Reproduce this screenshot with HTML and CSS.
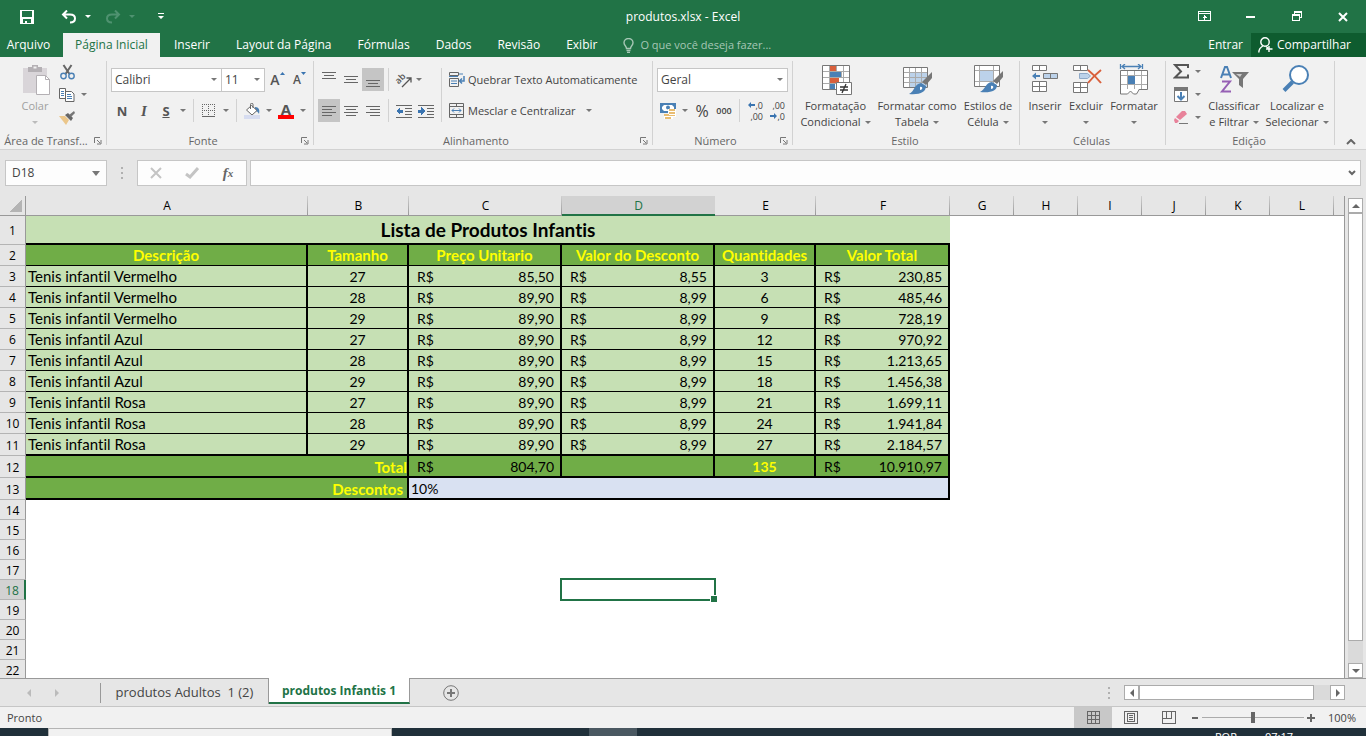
FILE: index.html
```html
<!DOCTYPE html>
<html lang="pt-BR">
<head>
<meta charset="utf-8">
<title>produtos.xlsx - Excel</title>
<link rel="stylesheet" href="styles.css">
</head>
<body>
<div class="app">
<header class="titlebar">
  <div class="quick">
    <button class="qbtn" aria-label="Salvar"><svg width="14" height="14" viewBox="0 0 14 14"><path d="M0 0h14v14H0z" fill="#fff"/><path d="M2 1h10v6H2zM3 9h8v4H7v-2H5v2H3z" fill="#217346"/></svg></button>
    <button class="qbtn undo" aria-label="Desfazer"><svg width="16" height="14" viewBox="0 0 16 14" fill="none" stroke="#fff" stroke-width="2"><path d="M6 0.500L2 4.500l4 4M2 4.500h7c3.500 0 5 2 5 4s-1.500 4-5 4"/></svg></button>
    <button class="drop white" aria-label="Opções de desfazer"></button>
    <button class="qbtn redo" aria-label="Refazer"><svg width="16" height="14" viewBox="0 0 16 14" fill="none" stroke="#4f9270" stroke-width="2"><path d="M10 0.500l4 4-4 4M14 4.500H7c-3.500 0-5 2-5 4s1.500 4 5 4"/></svg></button>
    <button class="drop faint" aria-label="Opções de refazer"></button>
    <button class="qbtn" aria-label="Personalizar"><svg width="6" height="7" viewBox="0 0 6 7" fill="#fff"><path d="M0 0h6v1H0zM0 3h6L3 6z"/></svg></button>
  </div>
  <h1 class="doc">produtos.xlsx - Excel</h1>
  <div class="window">
    <button aria-label="Opções da faixa"><svg width="14" height="11" viewBox="0 0 14 11" fill="none" stroke="#fff" shape-rendering="crispEdges"><path d="M.5.5h12v9H.5zM0 2.500h13M6.500 4v5M5.500 5.500h2M4.500 6.500h4"/></svg></button>
    <button aria-label="Minimizar"><svg width="10" height="10" viewBox="0 0 10 10" fill="#fff"><path d="M0 4h9v2H0z"/></svg></button>
    <button aria-label="Restaurar"><svg width="11" height="11" viewBox="0 0 11 11" fill="none" stroke="#fff" shape-rendering="crispEdges"><path d="M.5 3.500h7v6h-7zM0 4.500h8M2.500 3V.5h7v6H8M2 1.500h8"/></svg></button>
    <button aria-label="Fechar"><svg width="10" height="10" viewBox="0 0 10 10" stroke="#fff" stroke-width="2"><path d="M1 1l8 8M9 1L1 9"/></svg></button>
  </div>
</header>
<nav class="tabs">
  <button class="tab file">Arquivo</button>
  <button class="tab active">Página Inicial</button>
  <button class="tab">Inserir</button>
  <button class="tab">Layout da Página</button>
  <button class="tab">Fórmulas</button>
  <button class="tab">Dados</button>
  <button class="tab">Revisão</button>
  <button class="tab">Exibir</button>
  <label class="tell"><svg width="11" height="15" viewBox="0 0 11 15" fill="none" stroke="#a6c7b5" stroke-width="1.400"><path d="M3.500 10.500C3.500 8 1 7.500 1 4.800a4.500 4.300 0 0 1 9 0c0 2.700-2.500 3.200-2.500 5.700zM3.500 12.500h4M4 14.500h3"/></svg><input type="text" placeholder="O que você deseja fazer..." aria-label="O que você deseja fazer"></label>
  <button class="tab enter">Entrar</button>
  <button class="tab share"><svg width="15" height="16" viewBox="0 0 15 16" fill="none" stroke="#fff" stroke-width="1.400"><circle cx="7" cy="5" r="4.200"/><path d="M.8 15.500c0-3 1.500-5 4-6.500M8 9.500l2 1.500M11 9v6M8 12h6.500"/></svg>Compartilhar</button>
</nav>

<section class="ribbon" aria-label="Página Inicial">
  <div class="group g-clip">
    <div class="body">
      <button class="big off"><svg width="32" height="32" viewBox="0 0 32 32"><path d="M4 4h24v25H4z" fill="#d9d5d9"/><path d="M9 3h4V1h6v2h4v5H9z" fill="#b4b0b4"/><path d="M14.500 2.500h3v2h-3z" fill="#f1f1f1"/><path d="M17.500 11.500h9l4 4v15h-13z" fill="#fff" stroke="#b4b0b4"/><path d="M26.500 11.500v4h4" fill="none" stroke="#b4b0b4"/></svg><span>Colar</span><i class="ar"></i></button>
      <div class="smalls">
        <div class="line"><button class="ib" aria-label="Recortar"><svg width="15" height="16" viewBox="0 0 15 16" fill="none"><path d="M3.500 1l6 9M11.500 1l-6 9" stroke="#666" stroke-width="2"/><circle cx="3.500" cy="12" r="2.700" stroke="#4a80b5" stroke-width="1.400"/><circle cx="11.500" cy="12" r="2.700" stroke="#4a80b5" stroke-width="1.400"/></svg></button></div>
        <div class="line"><button class="ib" aria-label="Copiar"><svg width="16" height="14" viewBox="0 0 16 14"><path d="M.5.5h6v10h-6zM6.500 3.500h6l2.500 2.500v7.500H6.500z" fill="#fff" stroke="#666"/><path d="M2 3.500h3M2 5.500h3M2 7.500h3M8 6.500h4M8 8.500h5M8 10.500h5" stroke="#4a80b5"/></svg></button><button class="drop" aria-label="Opções de copiar"></button></div>
        <div class="line"><button class="ib" aria-label="Pincel de Formatação"><svg width="16" height="14" viewBox="0 0 16 14"><path d="M0 5l6 0 4 4-3 5z" fill="#ebc68a"/><path d="M6 4l3-2 5 5-2 3z" fill="#666"/><path d="M10 4l5-4 1 2-4 4z" fill="#777"/></svg></button></div>
      </div>
    </div>
    <div class="foot"><span>Área de Transf...</span><button class="launch" aria-label="Área de Transferência"><svg width="8" height="8" viewBox="0 0 8 8" fill="none" stroke="#777"><path d="M.5 6V.5H6M3 3l3 3M7 3v4H3"/></svg></button></div>
  </div>

  <div class="group g-font">
    <div class="body rows">
      <div class="row">
        <label class="combo font"><select aria-label="Fonte"><option>Calibri</option></select></label>
        <label class="combo size"><select aria-label="Tamanho"><option>11</option></select></label>
        <button class="ib glyph grow" aria-label="Aumentar Fonte">A<svg class="tip" width="5" height="12" viewBox="0 0 5 12" fill="#3a74b0"><path d="M0 3h5L2.500 0z"/></svg></button>
        <button class="ib glyph grow small" aria-label="Diminuir Fonte">A<svg class="tip" width="5" height="12" viewBox="0 0 5 12" fill="#3a74b0"><path d="M0 0h5L2.500 3z"/></svg></button>
      </div>
      <div class="row">
        <button class="ib glyph sm">N</button><button class="ib glyph sm it">I</button><button class="ib glyph sm ul">S</button><button class="drop" aria-label="Sublinhado"></button>
        <i class="sep"></i>
        <button class="ib" aria-label="Bordas"><svg width="14" height="14" viewBox="0 0 14 14" stroke="#666" fill="none" shape-rendering="crispEdges"><path d="M0 .5h13M0 6.500h13M.5 0v12M6.500 0v12M12.500 0v12" stroke-dasharray="1 1"/><path d="M0 12.500h13"/></svg></button><button class="drop" aria-label="Opções de bordas"></button>
        <i class="sep"></i>
        <button class="ib" aria-label="Cor de Preenchimento"><svg width="16" height="16" viewBox="0 0 16 16"><path d="M11 4c4 0 5 3 4 7-1-2-2-3-4-3z" fill="#4a80b5"/><path d="M7.500 2.500l5.500 5-5 4.500-5.500-5z" fill="#fff" stroke="#666"/><path d="M6.500 6V1.500a1.200 1.200 0 0 1 2.500 0V5" fill="none" stroke="#666"/><path d="M0 12h16v4H0z" fill="#d6dcf0"/></svg></button><button class="drop" aria-label="Opções de preenchimento"></button>
        <button class="ib glyph ink" aria-label="Cor da Fonte">A</button><button class="drop" aria-label="Opções de cor"></button>
      </div>
    </div>
    <div class="foot"><span>Fonte</span><button class="launch" aria-label="Opções de Fonte"><svg width="8" height="8" viewBox="0 0 8 8" fill="none" stroke="#777"><path d="M.5 6V.5H6M3 3l3 3M7 3v4H3"/></svg></button></div>
  </div>

  <div class="group g-align">
    <div class="body">
      <div class="rows stack">
        <div class="row">
          <button class="ib" aria-label="Alinhar em Cima"><svg class="ln" width="14" height="16" viewBox="0 0 14 16"><path d="M0 0.500h14M2 3.500h10M0 6.500h14"/></svg></button><button class="ib" aria-label="Alinhar no Meio"><svg class="ln" width="14" height="16" viewBox="0 0 14 16"><path d="M0 4.500h14M2 7.500h10M0 10.500h14"/></svg></button><button class="ib on" aria-label="Alinhar Embaixo"><svg class="ln" width="14" height="16" viewBox="0 0 14 16"><path d="M0 8.500h14M2 11.500h10M0 14.500h14"/></svg></button>
          <i class="sep"></i>
          <button class="ib" aria-label="Orientação"><svg class="angle" width="18" height="18" viewBox="0 0 18 18" fill="none" stroke="#555" stroke-width="1.300"><path d="M7 16L15.500 7.500M11.500 7H16v4.500"/><text class="ab" x="-7" y="12" transform="rotate(-45)">ab</text></svg></button><button class="drop near" aria-label="Opções de orientação"></button>
        </div>
        <div class="row">
          <button class="ib on" aria-label="Alinhar à Esquerda"><svg class="ln" width="14" height="12" viewBox="0 0 14 12"><path d="M0 1.500h14M0 4.500h10M0 7.500h14M0 10.500h10"/></svg></button><button class="ib" aria-label="Centralizar"><svg class="ln" width="14" height="12" viewBox="0 0 14 12"><path d="M0 1.500h14M2 4.500h10M0 7.500h14M2 10.500h10"/></svg></button><button class="ib" aria-label="Alinhar à Direita"><svg class="ln" width="14" height="12" viewBox="0 0 14 12"><path d="M0 1.500h14M4 4.500h10M0 7.500h14M4 10.500h10"/></svg></button>
          <i class="sep"></i>
          <button class="ib" aria-label="Diminuir Recuo"><svg class="ln" width="16" height="14" viewBox="0 0 16 14"><path d="M0 1.500h16M9 4.500h7M9 7.500h7M9 10.500h7M0 13.500h16"/><path class="fillblue" d="M0 7l4-4v2.500h3v3H4V11z"/></svg></button><button class="ib" aria-label="Aumentar Recuo"><svg class="ln" width="16" height="14" viewBox="0 0 16 14"><path d="M0 1.500h16M9 4.500h7M9 7.500h7M9 10.500h7M0 13.500h16"/><path class="fillblue" d="M7 7L3 3v2.500H0v3h3V11z"/></svg></button>
        </div>
      </div>
      <i class="sep tall"></i>
      <div class="rows wide">
        <button class="row txt"><svg width="16" height="16" viewBox="0 0 16 16" fill="none" stroke="#666"><path d="M.5.500h9v3h-9zM.5 6.500v8h9v-8z"/><path d="M0 4.500h9M2 9h6M2 11.500h6M10 2h4" stroke="#4a80b5"/><path d="M15 4v5h-4M13 6.500L10.500 9l2.500 2.500" stroke="#4a80b5" stroke-width="1.500"/></svg>Quebrar Texto Automaticamente</button>
        <button class="row txt"><svg width="16" height="16" viewBox="0 0 16 16" fill="none" stroke="#666"><path d="M.5.500h14v14H.5zM0 3.500h15M0 11.500h15M7.500 0v3M7.500 12v3"/><path d="M3 7.500h9M5 5.500l-2 2 2 2M10 5.500l2 2-2 2" stroke="#4a80b5"/></svg>Mesclar e Centralizar<i class="ar"></i></button>
      </div>
    </div>
    <div class="foot"><span>Alinhamento</span><button class="launch" aria-label="Opções de Alinhamento"><svg width="8" height="8" viewBox="0 0 8 8" fill="none" stroke="#777"><path d="M.5 6V.5H6M3 3l3 3M7 3v4H3"/></svg></button></div>
  </div>

  <div class="group g-num">
    <div class="body rows">
      <div class="row"><label class="combo num"><select aria-label="Formato"><option>Geral</option></select></label></div>
      <div class="row">
        <button class="ib" aria-label="Moeda"><svg width="16" height="16" viewBox="0 0 16 16"><path d="M0 0h16v10H0z" fill="#4a80b5"/><path d="M2 4l2-2h8l2 2v2H9v2H4L2 6z" fill="#fff"/><circle cx="8" cy="4.500" r="2" fill="#4a80b5"/><path d="M8 6h8v8h-3v2H4v-5h4z" fill="#fff"/><path d="M9 6h6v2H9zM9 9h6v2H9zM9 12h6v1H9zM4 11h5v2H4zM5 14h6v2H5z" fill="#e9bd72"/></svg></button><button class="drop" aria-label="Opções de moeda"></button><button class="ib pct">%</button><button class="ib zeros">000</button>
        <i class="sep"></i>
        <button class="ib dec" aria-label="Aumentar Casas Decimais"><span><svg width="8" height="6" viewBox="0 0 8 6" fill="#3a74b0"><path d="M0 3l3-3v2h4v2H3v2z"/></svg>,0</span><span>,00</span></button><button class="ib dec" aria-label="Diminuir Casas Decimais"><span>,00</span><span><svg width="8" height="6" viewBox="0 0 8 6" fill="#3a74b0"><path d="M7 3L4 0v2H0v2h4v2z"/></svg>,0</span></button>
      </div>
    </div>
    <div class="foot"><span>Número</span><button class="launch" aria-label="Opções de Número"><svg width="8" height="8" viewBox="0 0 8 8" fill="none" stroke="#777"><path d="M.5 6V.5H6M3 3l3 3M7 3v4H3"/></svg></button></div>
  </div>

  <div class="group g-style">
    <div class="body">
      <button class="big w-cond"><svg width="32" height="32" viewBox="0 0 32 32"><path d="M2 1h28v25H2z" fill="#fff"/><path d="M10 1h6v6h-6zM10 14h9v5h-9z" fill="#d9603c"/><path d="M10 8h11v5H10zM10 20h5v6h-5z" fill="#4a80b5"/><path d="M2 7.500h28M2 13.500h28M2 19.500h28M9.500 1v25M23.500 1v25M16.500 1v6M21.500 8v6" stroke="#aaa" fill="none"/><path d="M2.500 1.500h27v24h-27z" fill="none" stroke="#777"/><path d="M16.500 18.500h15v12h-15z" fill="#fff" stroke="#777"/><path d="M20 23h8M20 26h8M26 20l-4 9" stroke="#333" stroke-width="1.300"/></svg><span>Formatação<br>Condicional<i class="ar"></i></span></button>
      <button class="big w-tab"><svg width="32" height="32" viewBox="0 0 32 32"><path d="M2.500 3.500h24v20h-24z" fill="#fff" stroke="#777"/><path d="M9 9h17v14H9z" fill="#bcd2ea"/><path d="M3 8.500h23M3 13.500h23M3 18.500h23M8.500 4v19M14.500 4v19M20.500 4v19" stroke="#aaa"/><path d="M31 8v6l-6 7-4-3z" fill="#777"/><path d="M20 19l5 3c0 6-6 9-17 8 6-3 5-10 12-11z" fill="#4a80b5"/><path d="M19 23c3-1 3 3 0 3z" fill="#fff"/></svg><span>Formatar como<br>Tabela<i class="ar"></i></span></button>
      <button class="big w-cell"><svg width="32" height="32" viewBox="0 0 32 32"><path d="M2.500 1.500h25v21h-25z" fill="#fff" stroke="#777"/><path d="M8 7h13v10H8z" fill="#bcd2ea"/><path d="M3 6.500h24M3 17.500h24M7.500 2v20M21.500 2v20" stroke="#aaa"/><path d="M31 7v6l-6 7-4-3z" fill="#777"/><path d="M20 18l5 3c0 6-6 8-17 7 6-3 5-9 12-10z" fill="#4a80b5"/><path d="M19 22c3-1 3 3 0 3z" fill="#fff"/></svg><span>Estilos de<br>Célula<i class="ar"></i></span></button>
    </div>
    <div class="foot"><span>Estilo</span></div>
  </div>

  <div class="group g-cells">
    <div class="body">
      <button class="big w-ins"><svg width="32" height="32" viewBox="0 0 32 32" fill="#fff" stroke="#777"><path d="M3.500 1.500h14v5h-14zM10.500 1.500v5M3.500 17.500h14v10h-14zM10.500 17v11M3 22.500h15"/><path d="M14.500 9.500h14v5h-14z" fill="#bcd2ea"/><path d="M21.500 9.500v5"/><path d="M3 12l4-3.500V11h4v2H7v2.500z" fill="#4a80b5" stroke="none"/></svg><span>Inserir</span><i class="ar"></i></button>
      <button class="big w-del"><svg width="32" height="32" viewBox="0 0 32 32" fill="#fff" stroke="#777"><path d="M3.500 1.500h14v5h-14zM10.500 1.500v5M3.500 18.500h14v10h-14zM10.500 18v11M3 23.500h15"/><path d="M9.500 9.500h8l3 2.500-3 2.500h-8z" fill="#bcd2ea" stroke="#8ea9c8"/><path d="M18 6c5 4 9 8 13 13M31 6c-5 4-9 8-13 13" stroke="#d9603c" stroke-width="2" fill="none"/></svg><span>Excluir</span><i class="ar"></i></button>
      <button class="big w-fmt"><svg width="32" height="32" viewBox="0 0 32 32"><path d="M2.500 6.500h27v19h-27z" fill="#fff" stroke="#777"/><path d="M3 11.500h26M3 20.500h26M9.500 7v18M16.500 7v18M23.500 7v18" stroke="#aaa"/><path d="M10 12h7v8h-7z" fill="#4a80b5"/><path d="M2.500 25v5h7l3-3 3 3h3l3-5" fill="#fff" stroke="#777"/><path d="M2.500 0v5M24.500 0v5M4 2.500h19M7 0L4 2.500 7 5M20 0l3 2.500L20 5" stroke="#4a80b5" stroke-width="1.300" fill="none"/></svg><span>Formatar</span><i class="ar"></i></button>
    </div>
    <div class="foot"><span>Células</span></div>
  </div>

  <div class="group g-edit">
    <div class="body">
      <div class="smalls">
        <div class="line"><button class="ib" aria-label="Soma"><svg width="16" height="15" viewBox="0 0 16 15" fill="none" stroke="#555" stroke-width="2"><path d="M15 4V1H2l6 6.500L2 13.500h13v-3"/></svg></button><button class="drop" aria-label="Opções de soma"></button></div>
        <div class="line"><button class="ib" aria-label="Preencher"><svg width="14" height="15" viewBox="0 0 14 15"><path d="M.5.500h13v14H.5z" fill="#fff" stroke="#777"/><path d="M0 0h14v4H0z" fill="#777"/><path d="M7 5v7M3.500 9L7 12.500 10.500 9" fill="none" stroke="#4a80b5" stroke-width="2"/></svg></button><button class="drop" aria-label="Opções de preencher"></button></div>
        <div class="line"><button class="ib" aria-label="Limpar"><svg width="14" height="13" viewBox="0 0 14 13"><path d="M8 0h3l2 3-7 6-4-3z" fill="#e8829a"/><path d="M1 7l4 3-2 2H1L0 9z" fill="#e8829a"/><path d="M5 12.500h9" stroke="#777"/></svg></button><button class="drop" aria-label="Opções de limpar"></button></div>
      </div>
      <button class="big w-sort"><svg width="32" height="32" viewBox="0 0 32 32" fill="none"><path d="M3 14L7 3h2l4 11M4.500 10.500h7" stroke="#4a80b5" stroke-width="2"/><path d="M4 17.500h8l-8 10h9" stroke="#9660b4" stroke-width="2"/><path d="M14 8h17l-6 7v9l-4-3v-6z" fill="#777"/><path d="M18 10h6l-2 3z" fill="#ccc"/></svg><span>Classificar<br>e Filtrar<i class="ar"></i></span></button>
      <button class="big w-find"><svg width="32" height="32" viewBox="0 0 32 32" fill="none" stroke="#4a80b5"><circle cx="18" cy="11" r="9" fill="#fff" stroke-width="2"/><path d="M11.500 18L3 26.500" stroke-width="4"/></svg><span>Localizar e<br>Selecionar<i class="ar"></i></span></button>
    </div>
    <div class="foot"><span>Edição</span></div>
  </div>
  <button class="collapse" aria-label="Recolher"><svg width="10" height="6" viewBox="0 0 10 6" fill="none" stroke="#666" stroke-width="2"><path d="M1 5l4-4 4 4"/></svg></button>
</section>

<section class="formula">
  <div class="namebox"><input type="text" value="D18" aria-label="Caixa de Nome"><button class="drop" aria-label="Nomes"></button></div>
  <i class="dots"></i>
  <div class="fx">
    <button aria-label="Cancelar"><svg width="12" height="12" viewBox="0 0 12 12" stroke="#c4c4c4" stroke-width="2"><path d="M1 1l10 10M11 1L1 11"/></svg></button>
    <button aria-label="Inserir"><svg width="14" height="12" viewBox="0 0 14 12" fill="none" stroke="#c4c4c4" stroke-width="3"><path d="M1 7l4 3 8-9"/></svg></button>
    <button class="fn" aria-label="Inserir Função">f<sub>x</sub></button>
  </div>
  <label class="bar"><input type="text" aria-label="Barra de fórmulas"><svg width="8" height="6" viewBox="0 0 8 6" fill="none" stroke="#666" stroke-width="2"><path d="M1 1l3 3 3-3"/></svg></label>
</section>

<main class="work">
  <div class="sheet">
  <table class="grid">
    <colgroup><col class="c-h"><col class="c-a"><col class="c-b"><col class="c-c"><col class="c-c"><col class="c-b"><col class="c-f"><col class="c-g"><col class="c-g"><col class="c-g"><col class="c-g"><col class="c-g"><col class="c-g"><col></colgroup>
    <thead><tr><th class="corner"></th><th>A</th><th>B</th><th>C</th><th class="cur">D</th><th>E</th><th>F</th><th>G</th><th>H</th><th>I</th><th>J</th><th>K</th><th>L</th><th class="rest"></th></tr></thead>
    <tbody>
    <tr class="r1"><th>1</th><td colspan="6" class="title">Lista de Produtos Infantis</td><td colspan="7"></td></tr>
    <tr class="head"><th>2</th><td>Descrição</td><td>Tamanho</td><td>Preço Unitario</td><td>Valor do Desconto</td><td>Quantidades</td><td>Valor Total</td><td colspan="7"></td></tr>
    <tr class="item"><th>3</th><td>Tenis infantil Vermelho</td><td>27</td><td><p><b>R$</b>85,50</p></td><td><p><b>R$</b>8,55</p></td><td>3</td><td><p><b>R$</b>230,85</p></td><td colspan="7"></td></tr>
    <tr class="item"><th>4</th><td>Tenis infantil Vermelho</td><td>28</td><td><p><b>R$</b>89,90</p></td><td><p><b>R$</b>8,99</p></td><td>6</td><td><p><b>R$</b>485,46</p></td><td colspan="7"></td></tr>
    <tr class="item"><th>5</th><td>Tenis infantil Vermelho</td><td>29</td><td><p><b>R$</b>89,90</p></td><td><p><b>R$</b>8,99</p></td><td>9</td><td><p><b>R$</b>728,19</p></td><td colspan="7"></td></tr>
    <tr class="item"><th>6</th><td>Tenis infantil Azul</td><td>27</td><td><p><b>R$</b>89,90</p></td><td><p><b>R$</b>8,99</p></td><td>12</td><td><p><b>R$</b>970,92</p></td><td colspan="7"></td></tr>
    <tr class="item"><th>7</th><td>Tenis infantil Azul</td><td>28</td><td><p><b>R$</b>89,90</p></td><td><p><b>R$</b>8,99</p></td><td>15</td><td><p><b>R$</b>1.213,65</p></td><td colspan="7"></td></tr>
    <tr class="item"><th>8</th><td>Tenis infantil Azul</td><td>29</td><td><p><b>R$</b>89,90</p></td><td><p><b>R$</b>8,99</p></td><td>18</td><td><p><b>R$</b>1.456,38</p></td><td colspan="7"></td></tr>
    <tr class="item"><th>9</th><td>Tenis infantil Rosa</td><td>27</td><td><p><b>R$</b>89,90</p></td><td><p><b>R$</b>8,99</p></td><td>21</td><td><p><b>R$</b>1.699,11</p></td><td colspan="7"></td></tr>
    <tr class="item"><th>10</th><td>Tenis infantil Rosa</td><td>28</td><td><p><b>R$</b>89,90</p></td><td><p><b>R$</b>8,99</p></td><td>24</td><td><p><b>R$</b>1.941,84</p></td><td colspan="7"></td></tr>
    <tr class="item last"><th>11</th><td>Tenis infantil Rosa</td><td>29</td><td><p><b>R$</b>89,90</p></td><td><p><b>R$</b>8,99</p></td><td>27</td><td><p><b>R$</b>2.184,57</p></td><td colspan="7"></td></tr>
    <tr class="total"><th>12</th><td colspan="2" class="name">Total</td><td><p><b>R$</b>804,70</p></td><td></td><td class="qty">135</td><td><p><b>R$</b>10.910,97</p></td><td colspan="7"></td></tr>
    <tr class="total"><th>13</th><td colspan="2" class="name disc">Descontos</td><td colspan="4" class="rate">10%</td><td colspan="7"></td></tr>
    <tr><th>14</th><td colspan="13"></td></tr>
    <tr><th>15</th><td colspan="13"></td></tr>
    <tr><th>16</th><td colspan="13"></td></tr>
    <tr><th>17</th><td colspan="13"></td></tr>
    <tr><th class="cur">18</th><td colspan="3"></td><td class="sel"><i class="cursor"></i></td><td colspan="9"></td></tr>
    <tr><th>19</th><td colspan="13"></td></tr>
    <tr><th>20</th><td colspan="13"></td></tr>
    <tr><th>21</th><td colspan="13"></td></tr>
    <tr><th>22</th><td colspan="13"></td></tr>
    </tbody>
  </table>
  </div>
  <div class="vscroll"><button aria-label="Rolar para cima"><i class="tri up"></i></button><div class="thumb"></div><button aria-label="Rolar para baixo"><i class="tri down"></i></button></div>
</main>

<footer class="sheets">
  <div class="nav"><button aria-label="Planilha anterior"><i class="tri left pale"></i></button><button aria-label="Próxima planilha"><i class="tri right pale"></i></button></div>
  <button class="stab">produtos Adultos&nbsp; 1 (2)</button>
  <button class="stab active">produtos Infantis 1</button>
  <button class="add" aria-label="Nova planilha"><svg width="16" height="16" viewBox="0 0 16 16" fill="none" stroke="#777"><circle cx="8" cy="8" r="7.300"/><path d="M4 8h8M8 4v8" stroke-width="2"/></svg></button>
  <i class="dots"></i>
  <div class="hscroll"><button aria-label="Rolar para a esquerda"><i class="tri left"></i></button><div class="thumb"></div><button aria-label="Rolar para a direita"><i class="tri right"></i></button></div>
</footer>
<div class="status">
  <span class="ready">Pronto</span>
  <button class="view on" aria-label="Normal"><svg width="13" height="13" viewBox="0 0 13 13" fill="none" stroke="#666" shape-rendering="crispEdges"><path d="M.5.500h12v12H.5zM4.500 0v13M8.500 0v13M0 4.500h13M0 8.500h13"/></svg></button>
  <button class="view" aria-label="Layout da Página"><svg width="14" height="13" viewBox="0 0 14 13" fill="none" stroke="#666" shape-rendering="crispEdges"><path d="M.5.500h13v12H.5zM3.500 2.500h7v8h-7zM5 4.500h4M5 6.500h4M5 8.500h4"/></svg></button>
  <button class="view" aria-label="Quebra de Página"><svg width="14" height="13" viewBox="0 0 14 13" fill="none" stroke="#666" shape-rendering="crispEdges"><path d="M.5.500h13v12H.5zM4.500 0v7.500M9.500 0v7.500H0"/></svg></button>
  <button class="zb" aria-label="Menos zoom"><svg width="8" height="8" viewBox="0 0 8 8" fill="#666"><path d="M1 3h6v2H1z"/></svg></button>
  <input class="zoom" type="range" aria-label="Zoom" min="0" max="100" value="50">
  <button class="zb" aria-label="Mais zoom"><svg width="8" height="8" viewBox="0 0 8 8" fill="#666"><path d="M0 3h3V0h2v3h3v2H5v3H3V5H0z"/></svg></button>
  <span class="pc">100%</span>
</div>
<div class="taskbar"><div class="search"></div><div class="task"></div><span>POR</span><span class="clock">07:17</span></div>
</div>
</body>
</html>
```
FILE: styles.css
```css
* { box-sizing: border-box; }
html, body { height: 100%; }
body { margin: 0; overflow: hidden; font: 12px/16px "Open Sans", "Noto Sans", sans-serif; color: #444; background: #e6e6e6; }
button { border: 0; padding: 0; margin: 0; background: none; font: inherit; color: inherit; display: flex; align-items: center; justify-content: center; white-space: nowrap; }
input, select { font: inherit; color: inherit; border: 0; padding: 0; margin: 0; background: none; outline: 0; min-width: 0; }
svg { flex: none; display: block; }
.app { height: 100vh; display: flex; flex-direction: column; }

.titlebar { flex: none; height: 33px; display: grid; grid-template-columns: 1fr auto 1fr; align-items: center; background: #217346; color: #fff; }
.quick { display: flex; align-items: center; height: 30px; padding-left: 12px; }
.qbtn { width: 30px; height: 30px; }
.undo { margin-left: 12px; }
.quick .drop { width: 8px; }
.redo { margin-left: 6px; }
.quick .qbtn:last-child { margin-left: 10px; }
.doc { margin: 0; font-size: 12px; font-weight: 400; }
.window { display: flex; justify-content: flex-end; }
.window button { width: 46px; height: 30px; }

.tabs { flex: none; height: 24px; display: flex; background: #217346; color: #fff; }
.tab { padding: 0 13px; }
.tab.file { width: 63px; padding: 0 6px 0 0; }
.tab.active { width: 97px; margin-right: 1px; background: #f1f1f1; color: #217346; }
.tell { display: flex; align-items: center; gap: 6px; margin: 0 auto 0 13px; color: #a6c7b5; font-size: 11px; }
.tell input { width: 160px; }
.tell input::placeholder { color: #a6c7b5; opacity: 1; }
.tab.enter { padding: 0 8px 0 0; }
.tab.share { width: 115px; padding: 0 8px 0 0; gap: 4px; background: #0e5c2f; }

.ribbon { flex: none; height: 93px; display: flex; background: #f1f1f1; border-bottom: 1px solid #d2d2d2; }
.group { flex: none; display: flex; flex-direction: column; background: linear-gradient(#d2d2d2, #d2d2d2) right 4px / 1px 84px no-repeat; }
.g-clip { width: 107px; }
.g-font { width: 207px; }
.g-align { width: 339px; }
.g-num { width: 140px; }
.g-style { width: 227px; }
.g-cells { width: 146px; }
.g-edit { width: 169px; }
.body { height: 76px; display: flex; padding-left: 4px; }
.foot { height: 16px; display: flex; align-items: center; padding-right: 3px; font-size: 11px; color: #666; white-space: nowrap; }
.foot span { flex: 1; text-align: center; }
.launch { width: 12px; height: 12px; }
.rows { display: flex; flex-direction: column; gap: 8px; padding-top: 11px; }
.body.rows { padding-left: 4px; }
.row { height: 23px; display: flex; align-items: center; }
.stack { width: 123px; }
.ib { flex: none; width: 22px; height: 23px; }
.ib.on { background: #c5c5c5; }
.drop { flex: none; width: 12px; height: 22px; }
.drop.near { width: 8px; }
.drop::before, .ar, .combo::after { content: ""; border: 3px solid transparent; border-top-color: #777; border-bottom: 0; }
.drop.white::before { border-top-color: #fff; }
.drop.faint::before { border-top-color: #4f9270; }
.ar { display: inline-block; margin-left: 4px; vertical-align: 2px; }
.sep { flex: none; width: 1px; height: 23px; margin: 0 4px; background: #d2d2d2; }
.sep.tall { height: 54px; margin: 11px 7px 0 0; }
.glyph { font-weight: 700; font-size: 15px; color: #555; align-items: center; }
.glyph.sm { font-size: 13px; }
.grow { font-size: 14px; font-weight: 600; padding-left: 3px; }
.grow.small { font-size: 12px; }
.it { font-family: "Liberation Serif", serif; font-style: italic; }
.glyph.it { font-size: 15px; }
.ul { text-decoration: underline; }
.glyph .tip { align-self: flex-start; margin-top: 4px; }
.ink { height: 16px; width: 16px; margin: 0 3px; border-bottom: 4px solid #f00; line-height: 12px; }
.combo { display: flex; align-items: center; height: 24px; background: #fff; border: 1px solid #c6c6c6; padding: 0 4px 0 3px; }
.combo select { flex: 1; appearance: none; }
.font { width: 111px; }
.size { width: 43px; border-left: 0; }
.num { width: 131px; }
.ln { fill: none; stroke: #666; shape-rendering: crispEdges; }
.fillblue { fill: #3a74b0; stroke: none; }
.angle { overflow: visible; }
.ab { font: 600 9px "Open Sans", sans-serif; fill: #555; stroke: none; }
.txt { gap: 3px; font-size: 11px; }
.txt .ar { margin-left: 7px; }
.wide { align-items: flex-start; }
.pct { font-size: 16px; }
.zeros { font: 9px/12px "Open Sans", sans-serif; font-weight: 600; }
.dec { flex-direction: column; font: 9px/11px "Open Sans", sans-serif; }
.dec span { display: flex; justify-content: flex-end; width: 16px; height: 11px; align-items: center; }

.big { flex: none; flex-direction: column; justify-content: flex-start; padding-top: 7px; width: 42px; font-size: 11px; line-height: 16px; }
.big > span { margin-top: 2px; }
.big > .ar { margin: 7px 0 0; }
.off { width: 54px; margin-left: 4px; color: #a0a0a0; }
.off .ar { border-top-color: #bbb; }
.w-cond { width: 77px; }
.w-tab { width: 86px; }
.w-cell { width: 56px; }
.w-del { width: 40px; }
.w-fmt { width: 56px; }
.w-sort { width: 60px; }
.w-find { width: 66px; }
.smalls { padding-top: 3px; }
.g-clip .smalls { margin-left: -6px; }
.line { height: 23px; display: flex; align-items: center; }
.g-edit .smalls { width: 34px; }
.collapse { margin: auto 10px 4px auto; }

.formula { flex: none; display: flex; align-items: center; padding: 10px 5px; height: 46px; }
.namebox, .fx, .bar { height: 26px; display: flex; align-items: center; background: #fdfdfd; border: 1px solid #c6c6c6; }
.namebox { width: 102px; padding: 0 4px 0 6px; }
.namebox input { flex: 1; }
.drop::before { flex: none; }
.namebox .drop::before { border-width: 5px 4px 0; }
.dots { width: 2px; height: 12px; margin: 0 14px; background: repeating-linear-gradient(#b0b0b0 0 2px, transparent 2px 5px); }
.fx { width: 110px; }
.fx button { flex: 1; }
.fx .fn { font: italic 700 15px/16px "Liberation Serif", serif; color: #666; }
.fn sub { font-size: 11px; }
.bar { flex: 1; margin-left: 3px; padding: 0 4px; }
.bar input { flex: 1; }

.work { flex: 1; min-height: 0; display: flex; border-bottom: 1px solid #999; }
.sheet { flex: 1; min-width: 0; overflow: hidden; background: #fff; border-right: 1px solid #999; }
.grid { width: 100%; table-layout: fixed; border-collapse: separate; border-spacing: 0; font: 14px/16px Lato, "Open Sans", sans-serif; font-variant-ligatures: none; color: #000; }
.c-h { width: 26px; }
.c-a { width: 282px; }
.c-b { width: 101px; }
.c-c { width: 153px; }
.c-f { width: 134px; }
.c-g { width: 64px; }
.grid th, .grid td { padding: 2px 0 0; height: 20px; text-align: center; white-space: nowrap; }
.grid th { font: 12px/16px "Open Sans", sans-serif; background: #e6e6e6; border-right: 1px solid #999; border-bottom: 1px solid #b4b4b4; }
.grid thead th { padding-top: 0; border-right: 0; border-bottom-color: #999; background: linear-gradient(#d0d0d0, #999) right / 1px 100% no-repeat #e6e6e6; }
.grid thead th.rest { background: #e6e6e6; }
.grid thead th.corner { background: linear-gradient(#999, #999) right / 1px 100% no-repeat, linear-gradient(135deg, transparent 50%, #b4b4b4 50%) 10px 4px / 12px 12px no-repeat #e6e6e6; }
.grid thead th.cur { padding-top: 1px; border-bottom: 2px solid #217346; background: #d2d2d2; color: #217346; }
.grid tbody th.cur { border-right: 2px solid #217346; background: #d2d2d2; color: #217346; }
.grid .title { background: #c6e0b4; border-bottom: 2px solid #000; font-weight: 700; font-size: 19px; padding-top: 0; }
.grid .r1 > * { height: 29px; }
.head > *, .item > * { height: 21px !important; }
.grid .head td:not(:last-child), .grid .item td:not(:last-child), .grid .total td:not(:last-child) { border-right: 2px solid #000; border-bottom: 1px solid #000; }
.grid .head td:not(:last-child) { background: #70ad47; color: #ff0; font-weight: 700; font-size: 15px; padding-top: 0; }
.grid .item td:not(:last-child) { background: #c6e0b4; }
.grid .item td:nth-child(2) { text-align: left; padding: 0 0 0 2px; font-size: 15px; }
.item.last > *, .total > * { height: 22px !important; }
.grid .item.last td:not(:last-child), .grid .total td:not(:last-child) { border-bottom-width: 2px; }
.grid .total td:not(:last-child) { background: #70ad47; }
.grid .total .name { text-align: right; color: #ff0; font-weight: 700; font-size: 15px; }
.grid .total .disc { padding-right: 4px; }
.grid .total .qty { color: #ff0; font-weight: 700; }
.grid .total .rate:not(:last-child) { background: #d9e1f2; text-align: left; padding-left: 2px; }
.grid p { margin: 0; padding: 0 6px 0 8px; display: flex; justify-content: space-between; }
.grid b { font-weight: 400; }
.sel { position: relative; }
.cursor { position: absolute; inset: -2px -1px -1px -2px; border: 2px solid #217346; }
.cursor::after { content: ""; position: absolute; right: -3px; bottom: -3px; width: 6px; height: 6px; background: #217346; border: solid #fff; border-width: 1px 0 0 1px; }

.vscroll { width: 21px; padding: 2px 3px 0; display: flex; flex-direction: column; }
.vscroll button, .hscroll button { flex: none; width: 15px; height: 15px; background: #fff; border: 1px solid #ababab; }
.thumb { background: #fff; border: 1px solid #ababab; }
.vscroll .thumb { flex: 1; margin-bottom: 22px; box-shadow: 0 22px #dadada; }
.tri { border: 4px solid transparent; }
.up { border-top: 0; border-bottom-color: #666; }
.down { border-bottom: 0; border-top-color: #666; }
.left { border-left: 0; border-right-color: #666; }
.right { border-right: 0; border-left-color: #666; }
.left.pale { border-right-color: #bbb; }
.right.pale { border-left-color: #bbb; }

.sheets { flex: none; height: 28px; display: flex; align-items: center; border-bottom: 1px solid #c6c6c6; }
.nav { width: 101px; height: 20px; display: flex; padding-left: 15px; border-right: 1px solid #999; }
.nav button { width: 28px; }
.stab { width: 168px; height: 25px; align-self: flex-start; font-size: 13px; border-right: 1px solid #999; }
.stab.active { width: 141px; padding-top: 2px; background: #fff; color: #217346; font-weight: 700; border-bottom: 2px solid #217346; margin-top: -1px; height: 26px; font-size: 12px; }
.add { margin: 0 auto 0 33px; }
.hscroll { width: 221px; display: flex; margin-right: 21px; background: #dadada; }
.hscroll .thumb { flex: 1; margin-right: 16px; }

.status { flex: none; height: 21px; display: flex; align-items: center; background: #f1f1f1; font-size: 11px; }
.ready { margin: 0 auto 0 7px; }
.view { width: 38px; height: 21px; }
.view.on { background: #c8c8c8; }
.zb { width: 14px; height: 16px; }
.zoom { width: 102px; height: 12px; appearance: none; background: linear-gradient(#ababab, #ababab) center / 100% 1px no-repeat; }
.zoom::-webkit-slider-thumb { appearance: none; width: 4px; height: 11px; background: #666; }
.pc { width: 48px; text-align: center; }

.taskbar { flex: none; height: 8px; display: flex; overflow: hidden; background: #20303a; color: #fff; font-size: 11px; line-height: 18px; padding-left: 48px; }
.search { width: 344px; background: #f1f1f1; border: solid #b4b4b4; border-width: 1px 1px 0; }
.task { width: 48px; margin: 0 auto 0 197px; background: #4a5861; }
.clock { margin: 0 73px 0 28px; }
```
